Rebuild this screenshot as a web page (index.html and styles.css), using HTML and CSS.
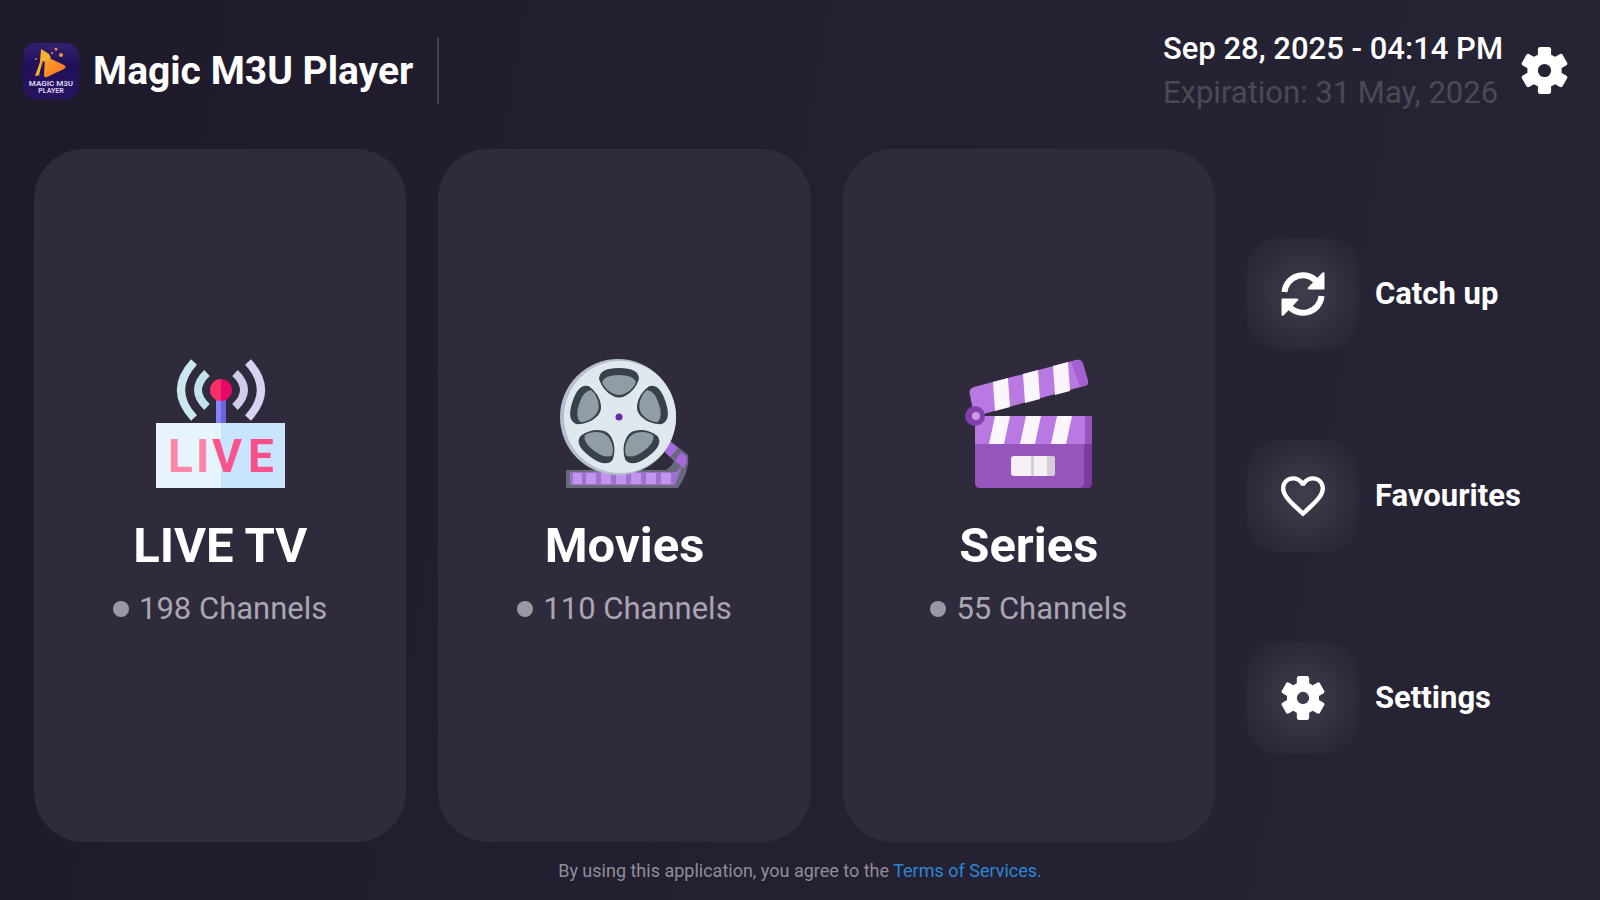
FILE: index.html
```html
<!DOCTYPE html>
<html lang="en">
<head>
  <meta charset="UTF-8">
  <meta name="viewport" content="width=device-width, initial-scale=1.0">
  <title>Magic M3U Player</title>
  <link rel="stylesheet" href="styles.css">
</head>
<body>

  <!-- Shared gear shape -->
  <svg class="defs" aria-hidden="true">
    <symbol id="gear" viewBox="-10 -10 20 20">
      <mask id="gear-hole">
        <rect x="-12" y="-12" width="24" height="24" fill="#fff"/>
        <circle r="2.8" fill="#000"/>
      </mask>
      <g fill="currentColor" mask="url(#gear-hole)">
        <circle r="7.3"/>
        <rect x="-2.8" y="-10" width="5.6" height="20" rx="1"/>
        <rect x="-2.8" y="-10" width="5.6" height="20" rx="1" transform="rotate(60)"/>
        <rect x="-2.8" y="-10" width="5.6" height="20" rx="1" transform="rotate(120)"/>
      </g>
    </symbol>
  </svg>

  <header class="header">
    <svg class="logo" viewBox="0 0 56 56" aria-hidden="true">
      <defs>
        <linearGradient id="logo-bg" x1="0" y1="0" x2="0" y2="1">
          <stop offset="0" stop-color="#35206f"/>
          <stop offset="0.4" stop-color="#20105c"/>
          <stop offset="1" stop-color="#28145f"/>
        </linearGradient>
        <linearGradient id="logo-play" x1="0" y1="0" x2="1" y2="1">
          <stop offset="0" stop-color="#ffa52e"/>
          <stop offset="1" stop-color="#f4701f"/>
        </linearGradient>
      </defs>
      <rect width="56" height="56" rx="13" fill="url(#logo-bg)"/>
      <path d="M22 13l19 9q3 2 0 4L24 34q-3 1-3-2z" fill="url(#logo-play)"/>
      <path d="M18 6l8 5 2 4-8 4-2 13-6 1 5-14z" fill="#f5b32c"/>
      <path d="M20 17l-1 15-3 0z" fill="#20105c"/>
      <circle cx="33" cy="6" r="1.5" fill="#f09a2e"/>
      <circle cx="38" cy="12" r="2" fill="#e99a35"/>
      <circle cx="29" cy="10" r="1" fill="#f09a2e"/>
      <circle cx="13" cy="16" r="1" fill="#e2733c"/>
      <text x="28" y="43" font-size="8" class="logo-text">MAGIC M3U</text>
      <text x="28" y="50" font-size="7" class="logo-text">PLAYER</text>
    </svg>
    <h1>Magic M3U Player</h1>
    <div class="divider"></div>

    <div class="status">
      <div class="date">Sep 28, 2025 - 04:14 PM</div>
      <div class="expiration">Expiration: 31 May, 2026</div>
    </div>
    <button class="gear-btn" aria-label="Settings">
      <svg><use href="#gear"/></svg>
    </button>
  </header>

  <main class="main">
    <button class="card">
      <svg class="card-icon" viewBox="0 0 130 130" aria-hidden="true">
        <g fill="none" stroke-width="8">
          <path d="M39 3Q13 31 39 59" stroke="#cbe7ef"/>
          <path d="M52 14Q34 31 52 48" stroke="#c2e2ea"/>
          <path d="M80 14Q98 31 80 48" stroke="#d0cdec"/>
          <path d="M93 3Q119 31 93 59" stroke="#d8d3f3"/>
        </g>
        <path d="M61 36h5v28h-5z" fill="#8b83f5"/>
        <path d="M66 36h5v28h-5z" fill="#6865e2"/>
        <path d="M66 20a11 11 0 0 0 0 22z" fill="#fb2f66"/>
        <path d="M66 20a11 11 0 0 1 0 22z" fill="#e6086b"/>
        <path d="M1 64h65v65H1z" fill="#e6f5fd"/>
        <path d="M66 64h64v65H66z" fill="#c9e5fe"/>
        <text y="113" class="live-text"><tspan x="13" fill="#fb86aa">L</tspan><tspan x="41" fill="#fb86aa">I</tspan><tspan x="57" fill="#f7558c">V</tspan><tspan x="93" fill="#f7508a">E</tspan></text>
      </svg>
      <span class="card-title">LIVE TV</span>
      <span class="channels">198 Channels</span>
    </button>

    <button class="card">
      <svg class="card-icon" viewBox="0 0 130 130" aria-hidden="true">
        <path d="M109 80L129 96Q131 112 119 129H7v-18h100q6-4 8-9l-13-13z" fill="#686a7c"/>
        <path d="M110 82l9 7-8 9-8-8z" fill="#a868e0"/>
        <path d="M122 93l6 5q0 6-3 11l-9-7z" fill="#a868e0"/>
        <path d="M11 113h106l6-6-7 19H11z" fill="#9d72cf"/>
        <path d="M14 114h9v11h-9zM27 114h10v11H27zM42 114h10v11H42zM57 114h10v11H57zM72 114h10v11H72zM87 114h10v11H87zM102 114h10v11h-10z" fill="#c294ed"/>
        <circle cx="59" cy="58" r="58" fill="#b6bfcb"/>
        <circle cx="61" cy="58" r="56" fill="#dfe8ec"/>
        <!-- One hole, repeated around the hub -->
        <g id="reel-hole">
          <path d="M40 20Q40 9 60 9t20 11Q76 32 66 37q-6 3-12 0Q44 32 40 20z" fill="#38404c"/>
          <path d="M43 23q3-7 17-7t17 7Q74 31 65 35q-5 2-10 0Q46 31 43 23z" fill="#919ca4"/>
        </g>
        <use href="#reel-hole" transform="rotate(72 60 58)"/>
        <use href="#reel-hole" transform="rotate(144 60 58)"/>
        <use href="#reel-hole" transform="rotate(216 60 58)"/>
        <use href="#reel-hole" transform="rotate(288 60 58)"/>
        <circle cx="60" cy="58" r="3.5" fill="#6a2aa8"/>
      </svg>
      <span class="card-title">Movies</span>
      <span class="channels">110 Channels</span>
    </button>

    <button class="card">
      <svg class="card-icon" viewBox="0 0 130 130" aria-hidden="true">
        <path d="M11 57h117v67q0 5-5 5H16q-5 0-5-5z" fill="#9654bd"/>
        <path d="M120 57h8v67q0 5-5 5h-9q6 0 6-5z" fill="#7c3b9d"/>
        <path d="M11 57h110v28H11z" fill="#b978e2"/>
        <path d="M121 57h7v28h-7z" fill="#9854bd"/>
        <path d="M31 57h15l-6 28H25zM62 57h15l-6 28H56zM93 57h15l-6 28H87z" fill="#faf6fb"/>
        <path d="M10 56L6 36q-2-6 4-8L112 1q5-1 7 4l5 17q1 4-4 5L16 56z" fill="#b978e2"/>
        <path d="M112 1q5-1 7 4l5 17q1 4-4 5l-4 1-9-25z" fill="#a561cf"/>
        <path d="M29 23l15-4 2 29-15 4zM59 15l15-4 2 29-15 4zM89 7l15-4 2 29-15 4z" fill="#faf6fb"/>
        <circle cx="11" cy="57" r="10" fill="#8140ab"/>
        <circle cx="12" cy="57" r="4" fill="#c99be2"/>
        <rect x="47" y="97" width="44" height="20" rx="3" fill="#f6f0f5"/>
        <path d="M67 97h3v20h-3zM83 97h5q3 0 3 3v14q0 3-3 3h-5z" fill="#d6cdd8"/>
      </svg>
      <span class="card-title">Series</span>
      <span class="channels">55 Channels</span>
    </button>

    <nav class="side">
      <button class="side-item">
        <span class="tile">
          <svg viewBox="-22 -22 44 44" aria-hidden="true">
            <path id="turn" d="M-18.500-2A18.500 18.500 0 0 1 15-11" fill="none" stroke="currentColor" stroke-width="6"/>
            <path id="head" d="M21.500-20.500V-5.500q0 1-1 1H6q-2 0-1-2L19.500-21.500q2-1 2 1z" fill="currentColor"/>
            <use href="#turn" transform="rotate(180)"/>
            <use href="#head" transform="rotate(180)"/>
          </svg>
        </span>
        Catch up
      </button>
      <button class="side-item">
        <span class="tile">
          <svg viewBox="2 2 20 20" aria-hidden="true">
            <path d="M16.500 3c-1.740 0-3.410.81-4.500 2.090C10.910 3.810 9.240 3 7.500 3 4.420 3 2 5.420 2 8.500c0 3.780 3.400 6.860 8.550 11.540L12 21.350l1.450-1.320C18.600 15.360 22 12.280 22 8.500 22 5.420 19.580 3 16.500 3zm-4.400 15.550l-.1.100-.1-.1C7.140 14.240 4 11.390 4 8.500 4 6.500 5.500 5 7.500 5c1.540 0 3.040.99 3.570 2.360h1.870C13.460 5.990 14.960 5 16.500 5c2 0 3.500 1.500 3.500 3.500 0 2.890-3.140 5.740-7.900 10.050z" fill="currentColor"/>
          </svg>
        </span>
        Favourites
      </button>
      <button class="side-item">
        <span class="tile">
          <svg aria-hidden="true"><use href="#gear"/></svg>
        </span>
        Settings
      </button>
    </nav>
  </main>

  <footer class="footer">By using this application, you agree to the <a href="#">Terms of Services.</a></footer>

</body>
</html>
```
FILE: styles.css
```css
* {
  box-sizing: border-box;
}

body {
  margin: 0;
  min-height: 100vh;
  display: flex;
  flex-direction: column;
  font-family: Roboto, sans-serif;
  color: #fff;
  background: linear-gradient(100deg, #1f1a2b, #242132 60%, #272435);
}

button {
  padding: 0;
  border: none;
  background: none;
  color: inherit;
  font-family: inherit;
  cursor: pointer;
}

.defs {
  position: absolute;
  width: 0;
  height: 0;
}

/* Header */
.header {
  display: flex;
  align-items: center;
  height: 149px;
  padding: 0 32px 8px 23px;
}

.logo {
  width: 56px;
  height: 56px;
}

.logo-text {
  fill: #d8cdf0;
  font-weight: 700;
  text-anchor: middle;
}

h1 {
  margin: 0 24px 0 14px;
  font-size: 39px;
  line-height: 48px;
}

.divider {
  width: 2px;
  height: 66px;
  background-color: #464252;
}

.status {
  margin-left: auto;
  font-size: 31px;
  line-height: 44px;
}

.date {
  font-weight: 500;
}

.expiration {
  color: #4b4858;
}

.gear-btn {
  margin-left: 18px;
}

.gear-btn svg {
  display: block;
  width: 47px;
  height: 47px;
}

/* Cards */
.main {
  flex: 1;
  display: grid;
  grid-template-columns: repeat(3, 1fr) 320px;
  gap: 32px;
  padding: 0 33px 0 34px;
}

.card {
  display: flex;
  flex-direction: column;
  align-items: center;
  justify-content: center;
  padding-bottom: 4px;
  border-radius: 50px;
  background-color: #2f2b3c;
}

.card-icon {
  width: 130px;
  height: 130px;
}

.live-text {
  font-size: 46px;
  font-weight: 700;
}

.card-title {
  margin: 27px 0 13px;
  font-size: 49px;
  font-weight: 700;
  line-height: 60px;
}

.channels {
  display: flex;
  align-items: center;
  gap: 10px;
  color: #a9a6b1;
  font-size: 31px;
  line-height: 40px;
}

.channels::before {
  content: "";
  width: 16px;
  height: 16px;
  border-radius: 50%;
  background-color: #9b98a4;
}

/* Side menu */
.side {
  display: flex;
  flex-direction: column;
  justify-content: center;
  gap: 90px;
}

.side-item {
  display: flex;
  align-items: center;
  gap: 16px;
  font-size: 31px;
  font-weight: 700;
}

.tile {
  display: flex;
  align-items: center;
  justify-content: center;
  width: 112px;
  height: 112px;
  border-radius: 32px;
  background: radial-gradient(circle, #403d4c, #2a2738 75%);
}

.tile svg {
  width: 44px;
  height: 44px;
}

/* Footer */
.footer {
  height: 58px;
  text-align: center;
  color: #908d98;
  font-size: 18px;
  line-height: 58px;
}

.footer a {
  color: #2e86d2;
  text-decoration: none;
}
```
